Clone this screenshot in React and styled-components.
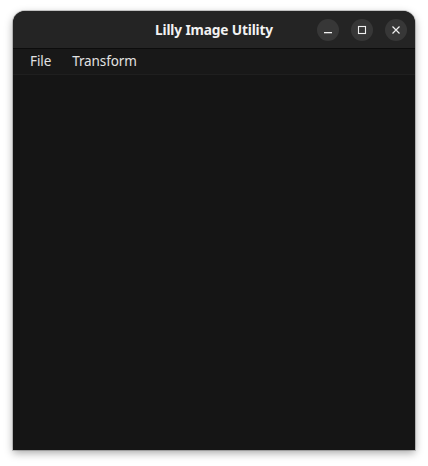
import React from 'react'
import styled, { createGlobalStyle } from 'styled-components'

const Global = createGlobalStyle`
  html, body {
    margin: 0;
    padding: 0;
    background: #ffffff;
  }
  body {
    font-family: "Noto Sans", "Open Sans", sans-serif;
  }
`

const Page = styled.div`
  width: 428px;
  height: 466px;
  padding: 11px 13px 16px 13px;
  box-sizing: border-box;
`

const Window = styled.div`
  width: 402px;
  height: 439px;
  display: flex;
  flex-direction: column;
  background: #151515;
  border-radius: 12px 12px 0 0;
  overflow: hidden;
  box-shadow: 0 3px 9px rgba(0, 0, 0, 0.35), 0 0 0 1px rgba(0, 0, 0, 0.18);
`

const TitleBar = styled.div`
  height: 37px;
  flex: none;
  display: grid;
  grid-template-columns: 1fr auto 1fr;
  align-items: center;
  background: #242424;
  border-bottom: 1px solid #0c0c0c;
`

const Title = styled.div`
  grid-column: 2;
  color: #f2f2f2;
  font-size: 13.7px;
  font-weight: 700;
  letter-spacing: -0.15px;
`

const Controls = styled.div`
  grid-column: 3;
  justify-self: end;
  display: flex;
  gap: 12px;
  padding-right: 8px;
`

const RoundButton = styled.button`
  width: 22px;
  height: 22px;
  border: none;
  border-radius: 50%;
  padding: 0;
  background: #373737;
  color: #f0f0f0;
  display: flex;
  align-items: center;
  justify-content: center;
`

const MenuBar = styled.div`
  height: 26px;
  flex: none;
  display: flex;
  align-items: center;
  gap: 21px;
  padding: 0 0 2px 17px;
  box-sizing: border-box;
  background: #181818;
  border-bottom: 1px solid #1f1f1f;
`

const MenuItem = styled.span`
  color: #e2e2e2;
  font-size: 13.5px;
  letter-spacing: -0.1px;
`

const Body = styled.div`
  flex: 1;
  background: #151515;
`

export default function App() {
  return (
    <Page>
      <Global />
      <Window>
        <TitleBar>
          <Title>Lilly Image Utility</Title>
          <Controls>
            <RoundButton aria-label="Minimize">
              <svg width="10" height="10" viewBox="0 0 10 10">
                <rect x="1" y="7" width="8" height="1.3" fill="currentColor" />
              </svg>
            </RoundButton>
            <RoundButton aria-label="Maximize">
              <svg width="10" height="10" viewBox="0 0 10 10">
                <rect x="1.5" y="1.5" width="7" height="7" fill="none" stroke="currentColor" strokeWidth="1.1" />
              </svg>
            </RoundButton>
            <RoundButton aria-label="Close">
              <svg width="10" height="10" viewBox="0 0 10 10">
                <path d="M1.5 1.5 L8.5 8.5 M8.5 1.5 L1.5 8.5" stroke="currentColor" strokeWidth="1.2" />
              </svg>
            </RoundButton>
          </Controls>
        </TitleBar>
        <MenuBar>
          <MenuItem>File</MenuItem>
          <MenuItem>Transform</MenuItem>
        </MenuBar>
        <Body />
      </Window>
    </Page>
  )
}
